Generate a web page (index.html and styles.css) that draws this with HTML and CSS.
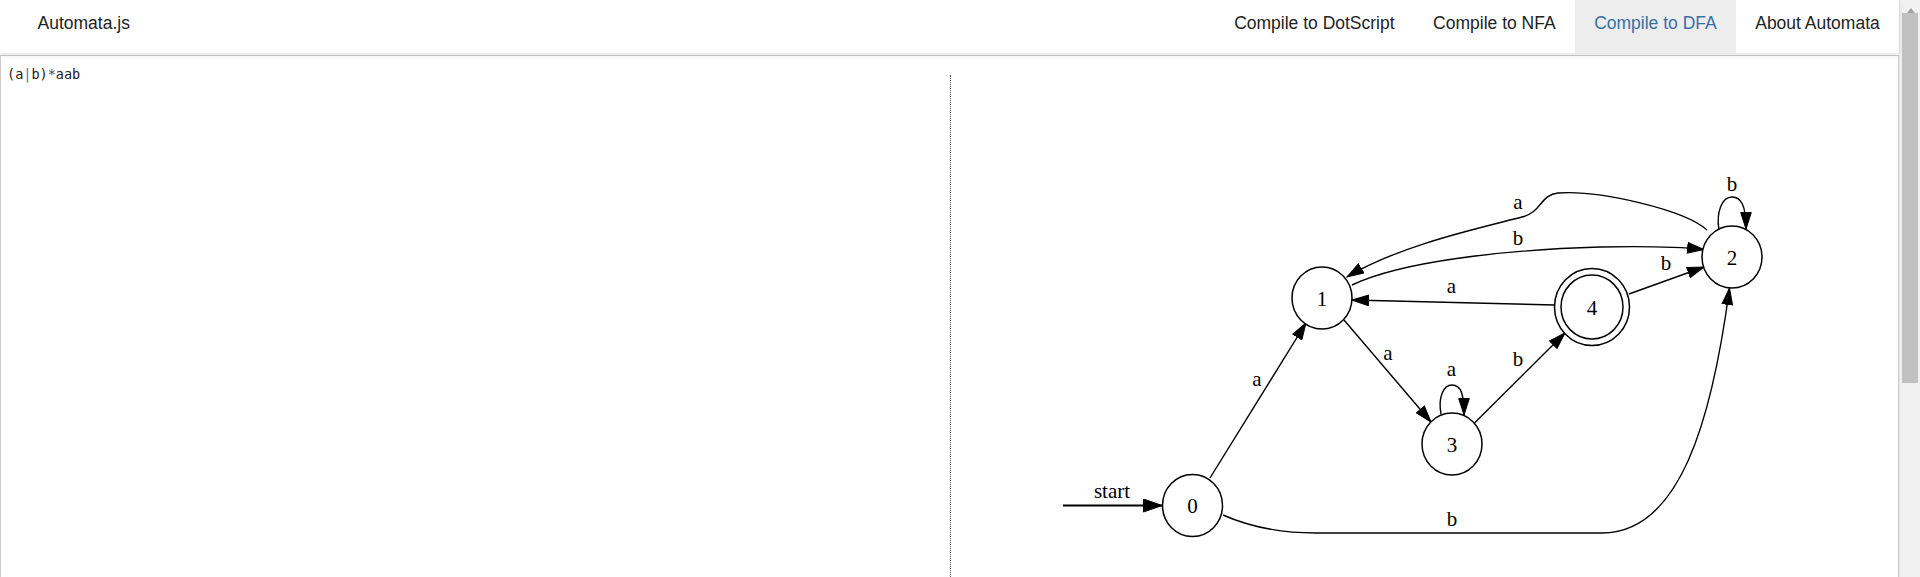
FILE: index.html
```html
<!DOCTYPE html>
<html>
<head>
    <meta charset="UTF-8">
    <meta name="viewport" content="width=device-width, initial-scale=1.0">
    <title>Automata.js</title>
    <link rel="stylesheet" href="styles.css">
</head>
<body>
<div id="page">
    <nav id="navbar">
        <a class="brand" href="#">Automata.js</a>
        <ul class="nav-links">
            <li><a href="#">Compile to DotScript</a></li>
            <li><a href="#">Compile to NFA</a></li>
            <li class="active"><a href="#">Compile to DFA</a></li>
            <li><a href="#">About Automata</a></li>
        </ul>
    </nav>
    <div id="workspace">
        <div id="editor"><span class="tok-paren">(</span>a<span class="tok-op">|</span>b<span class="tok-paren">)</span><span class="tok-star">*</span>aab</div>
        <div id="viewer">
            <svg id="graph" width="947" height="480" viewBox="951 75 947 480">
                <defs>
                    <marker id="arrow" markerUnits="userSpaceOnUse" markerWidth="18" markerHeight="12" refX="17" refY="6" orient="auto" viewBox="0 0 18 12">
                        <path d="M0.5,0.7 L17,6 L0.5,11.3 z"/>
                    </marker>
                    <marker id="arrow-bold" markerUnits="userSpaceOnUse" markerWidth="20" markerHeight="14" refX="19" refY="7" orient="auto" viewBox="0 0 20 14">
                        <path d="M0.5,0.5 L19,7 L0.5,13.5 z"/>
                    </marker>
                </defs>

                <!-- edges -->
                <path class="edge start" d="M1063,505.5 L1162,505.5"/>
                <path class="edge" d="M1210,478 L1306,323"/>
                <path class="edge" d="M1223,515 C1250,527 1280,533 1316,533 L1602,533 C1680,533 1712,420 1729.5,288"/>
                <path class="edge" d="M1352,285 C1400,262 1500,250 1600,247 C1650,246 1680,247 1704,249.5"/>
                <path class="edge" d="M1707,230 C1685,210 1600,190 1558,193 C1540,195 1542,212 1522,217 C1480,228 1400,245 1347,277"/>
                <path class="edge" d="M1719,230 C1716,212 1722,197 1732,197 C1741,197 1746,205 1746,229"/>
                <path class="edge" d="M1555,305 L1352,300"/>
                <path class="edge" d="M1629,294 L1704,267"/>
                <path class="edge" d="M1344,320 L1431,422"/>
                <path class="edge" d="M1441,414 C1438,398 1443,385 1452,385 C1461,385 1464,394 1464,415"/>
                <path class="edge" d="M1474.5,423 L1565,333"/>

                <!-- edge labels -->
                <text x="1112" y="498">start</text>
                <text x="1257" y="386">a</text>
                <text x="1452" y="526">b</text>
                <text x="1518" y="245">b</text>
                <text x="1518" y="209">a</text>
                <text x="1732" y="191">b</text>
                <text x="1451.5" y="293">a</text>
                <text x="1666" y="270">b</text>
                <text x="1388" y="360">a</text>
                <text x="1451.5" y="376">a</text>
                <text x="1518" y="366">b</text>

                <!-- states -->
                <g class="node">
                    <ellipse cx="1192.5" cy="505.5" rx="30" ry="31"/>
                    <text x="1192.5" y="513">0</text>
                </g>
                <g class="node">
                    <ellipse cx="1322" cy="298" rx="30" ry="31"/>
                    <text x="1322" y="305.5">1</text>
                </g>
                <g class="node">
                    <ellipse cx="1732" cy="257" rx="30" ry="31"/>
                    <text x="1732" y="264.5">2</text>
                </g>
                <g class="node">
                    <ellipse cx="1452" cy="444" rx="30" ry="31"/>
                    <text x="1452" y="451.5">3</text>
                </g>
                <g class="node">
                    <ellipse cx="1592" cy="307" rx="37.5" ry="38.5"/>
                    <ellipse cx="1592" cy="307" rx="31" ry="32"/>
                    <text x="1592" y="314.5">4</text>
                </g>
            </svg>
        </div>
    </div>
</div>
<div class="scrollbar">
    <div class="scroll-up"></div>
    <div class="scroll-thumb"></div>
</div>
</body>
</html>
```

FILE: styles.css
```css
body {
    font-family: "Liberation Sans", Arial, sans-serif;
    margin: 0;
    color: #222;
    display: flex;
    align-items: flex-start;
}
#page {
    flex: 1;
    min-width: 0;
}
.scrollbar {
    flex: 0 0 21px;
    height: 100vh;
    position: sticky;
    top: 0;
    background-color: #f1f1f1;
    border-left: 1px solid #e6e6e6;
    box-sizing: border-box;
}
.scroll-up {
    height: 13px;
    display: flex;
    justify-content: center;
    padding-top: 3px;
    box-sizing: border-box;
}
.scroll-up::before {
    content: "";
    border-left: 4px solid transparent;
    border-right: 4px solid transparent;
    border-bottom: 5px solid #a3a3a3;
    margin-left: 1px;
}
.scroll-thumb {
    height: 370px;
    margin: 0 2px 0 2px;
    background-color: #c1c1c1;
}
#navbar {
    display: flex;
    justify-content: space-between;
    height: 53px;
    background-color: #fff;
    box-shadow: 0 2px 5px rgba(0, 0, 0, 0.12);
    position: relative;
    z-index: 1;
}
#navbar a {
    display: block;
    font-size: 17.5px;
    line-height: 22px;
    color: #222;
    text-decoration: none;
    padding: 12px 19.25px 19px;
}
#navbar .brand {
    padding-left: 37.5px;
}
.nav-links {
    display: flex;
    list-style: none;
    margin: 0;
    padding: 0;
}
#navbar .active a {
    background-color: #ededed;
    color: #3a6fa6;
}
#workspace {
    display: flex;
    height: 811px;
    margin-top: 2px;
    border: 1px solid #ccc;
    background-color: #fff;
}
#editor {
    width: 949px;
    flex-shrink: 0;
    padding: 9.5px 6px;
    box-sizing: border-box;
    font-family: "DejaVu Sans Mono", monospace;
    font-size: 13.5px;
    line-height: 16px;
    color: #222;
}
.tok-op {
    color: #1f7ac0;
}
.tok-star {
    color: #6b4a2a;
}
#viewer {
    flex: 1;
    margin-top: 19px;
    border-left: 1px dotted #555;
}
#graph {
    display: block;
}
#graph .edge {
    fill: none;
    stroke: #000;
    stroke-width: 1.4;
    marker-end: url(#arrow);
}
#graph .edge.start {
    stroke-width: 2;
    marker-end: url(#arrow-bold);
}
#graph marker path {
    fill: #000;
    stroke: #000;
}
#graph text {
    font-family: "Liberation Serif", "Times New Roman", serif;
    font-size: 21px;
    text-anchor: middle;
    fill: #000;
}
#graph .node ellipse {
    fill: #fff;
    stroke: #000;
    stroke-width: 1.5;
}
```
